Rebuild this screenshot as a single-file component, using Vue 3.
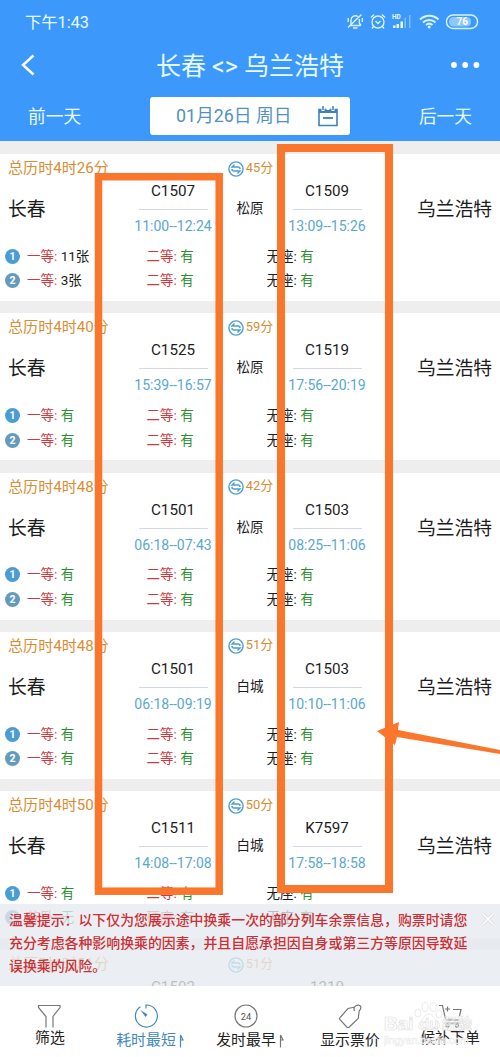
<template>
  <div class="screen">
    <header class="header">
      <div class="status">
        <span class="clock">下午1:43</span>
        <svg class="status-icons" width="136" height="20" viewBox="0 0 136 20" fill="none" stroke="#d9f4ff" stroke-width="1.400">
          <path d="M4 14.500h10.500M5 13.500V9a4.500 4.500 0 0 1 7-3.500M13.300 8v4l1.700 2.500M7 17h4.500M2 16.500 15.500 3.500M2.200 7v4M16.300 7v4" />
          <circle cx="32" cy="11" r="6" />
          <path d="m29.500 10 2.500 2.500 2.500-2.500M25 6.500l3-3M36 3.500l3 3M27.500 15.500 26 17.500M36.500 15.500l1.500 2" />
          <text x="46" y="7.500" class="hd">HD</text>
          <g stroke="none" fill="#e9fbff">
            <path d="M47 14.500h2.500V17H47zM50.500 13h2.500v4h-2.500zM54.500 10.500H57V17h-2.500z" />
            <path d="M58.500 6.500H60V17h-1.500zM63 4h1.500v13H63z" opacity=".4" />
          </g>
          <path d="M74 8.500a13 13 0 0 1 18.500 0M77 11.500a9 9 0 0 1 12.500 0M80 14a5 5 0 0 1 6.500 0" stroke-width="2" />
          <circle cx="83.200" cy="16" r="1.500" fill="#d9f4ff" stroke="none" />
          <rect x="100.500" y="4" width="31" height="13.500" rx="6.500" />
          <rect x="103" y="6" width="22" height="9.500" rx="4.500" fill="#8ec8fb" stroke="none" />
          <text x="110.500" y="14.400" class="battery">76</text>
        </svg>
      </div>
      <div class="title-row">
        <svg width="16" height="24" viewBox="0 0 16 24" fill="none" stroke="#fff" stroke-width="2.500">
          <path d="M13.500 2.500 3 12l10.500 9.500" />
        </svg>
        <h1>长春 &lt;&gt; 乌兰浩特</h1>
        <svg width="30" height="8" viewBox="0 0 30 8" fill="#fff">
          <circle cx="4" cy="4" r="2.900" />
          <circle cx="15.200" cy="4" r="2.900" />
          <circle cx="26.400" cy="4" r="2.900" />
        </svg>
      </div>
      <div class="date-row">
        <span class="day">前一天</span>
        <div class="date">
          <span>01月26日 周日</span>
          <svg width="20" height="21" viewBox="0 0 20 21" fill="none" stroke="#3e82b8">
            <path d="M1 3.500h18v16H1z" stroke-width="1.600" />
            <path d="M1 5h18" stroke-width="4" />
            <path d="M5 0v5M10 0v4M15 0v5" stroke="#fff" stroke-width="3" />
            <path d="M5 0v4M15 0v4" stroke-width="1.500" />
            <path d="M5 12h10" stroke-width="1.800" />
          </svg>
        </div>
        <span class="day">后一天</span>
      </div>
    </header>

    <main class="list">
      <section v-for="(trip, i) in trips" :key="i" class="card">
        <div class="route">
          <div class="from">
            <span class="total">总历时{{ trip.total }}</span>
            <span class="city">长春</span>
          </div>
          <div class="train">
            <span class="no">{{ trip.first[0] }}</span>
            <span class="time">{{ trip.first[1] }}</span>
          </div>
          <div class="via">
            <span class="wait">
              <svg width="16" height="16" viewBox="0 0 16 16" fill="none" stroke="#4e9fcf" stroke-width="1.400">
                <circle cx="8" cy="8" r="7.100" />
                <path d="M6.500 3.500 4 6h6c1.500 0 2 .8 2 2M9.500 12.500 12 10H6C4.500 10 4 9.200 4 8" />
              </svg>
              {{ trip.wait }}分
            </span>
            <span class="via-city">{{ trip.via }}</span>
          </div>
          <div class="train">
            <span class="no">{{ trip.second[0] }}</span>
            <span class="time">{{ trip.second[1] }}</span>
          </div>
          <span class="city to">乌兰浩特</span>
        </div>
        <div v-for="(seat, n) in trip.seats" :key="n" class="seats">
          <i :class="{ two: n === 1 }">{{ n + 1 }}</i>
          <span class="s1"><b>{{ seat[0] }}:</b> <em :class="{ count: seat[1].includes('张') }">{{ seat[1] }}</em></span>
          <span class="s2"><b>{{ seat[2] }}:</b> <em>有</em></span>
          <span class="s3">无座: <em>有</em></span>
        </div>
      </section>

      <div class="notice">
        <p>温馨提示：以下仅为您展示途中换乘一次的部分列车余票信息，购票时请您</p>
        <p>充分考虑各种影响换乘的因素，并且自愿承担因自身或第三方等原因导致延</p>
        <p>误换乘的风险。</p>
        <svg class="close" width="14" height="14" viewBox="0 0 14 14" fill="none">
          <path d="m1.500 1.500 11 11M12.500 1.500l-11 11" stroke="#d3d8dc" stroke-width="3" />
          <path d="m1.500 1.500 11 11M12.500 1.500l-11 11" stroke="#fff" stroke-width="1.600" />
        </svg>
      </div>
    </main>

    <footer class="tabs">
      <div class="tab filter">
        <svg width="26" height="26" viewBox="0 0 26 26">
          <path d="M10 24.500V13.500L2.500 4.500V2.500h21.500v2l-7 9v11" />
        </svg>
        <span>筛选</span>
      </div>
      <div class="tab active">
        <svg width="26" height="26" viewBox="0 0 26 26">
          <path d="M7.500 3.700A11 11 0 1 0 13 2v3.500" />
          <path d="m7.500 7 7 4.500-2 2.500z" class="solid" />
        </svg>
        <span>耗时最短<svg width="5" height="14" viewBox="0 0 5 14"><path d="M1.500 13.500V1L4 6H1.500" /></svg></span>
      </div>
      <div class="tab">
        <svg width="26" height="26" viewBox="0 0 26 26">
          <circle cx="13" cy="13" r="11" />
          <text x="7.700" y="16.500">24</text>
        </svg>
        <span>发时最早<svg width="5" height="14" viewBox="0 0 5 14"><path d="M1.500 13.500V1L4 6H1.500" /></svg></span>
      </div>
      <div class="tab price">
        <svg width="26" height="26" viewBox="0 0 26 26">
          <path d="M17.500 8C16 4.500 18.500 2 21.500 2.200c3 .3 3 3 .7 5.800l-1 7.500L12 24.200q-1 .7-2 0l-7-7.500q-1-1 0-2L11 5.500l7-1.500" />
        </svg>
        <span>显示票价</span>
      </div>
      <div class="tab order">
        <svg width="26" height="26" viewBox="0 0 26 26">
          <path d="M2 2.500h3.500l3 13.500M8 6h5m-2.500-2.500v5M16 6.500h8L22.500 13M9 17h13M8.500 20h14" />
          <circle cx="10.500" cy="22.500" r="1.600" />
          <circle cx="20" cy="22.500" r="1.600" />
        </svg>
        <span>候补下单</span>
      </div>
      <svg class="watermark" width="96" height="50" viewBox="0 0 96 50">
        <text x="0" y="30" class="wm-big">Bai</text>
        <text x="36" y="29" class="wm-du">du</text>
        <text x="58" y="29" class="wm-cn">经验</text>
        <text x="0" y="44" class="wm-url">jingyan.baidu.com</text>
        <g>
          <ellipse cx="34" cy="13" rx="3" ry="4" />
          <ellipse cx="41" cy="7" rx="3" ry="4.500" />
          <ellipse cx="49" cy="7" rx="3" ry="4.500" />
          <ellipse cx="55" cy="14" rx="3" ry="4" />
          <path d="M45 14c-4 0-6 5-9 8s-1 9 4 8 6-1 10 0 8-5 4-8-5-8-9-8z" fill="none" />
        </g>
      </svg>
    </footer>

    <!-- highlight frames and arrow over the list -->
    <svg class="marks" width="500" height="1057" viewBox="0 0 500 1057" fill="none" stroke="#fb762d">
      <rect x="98.500" y="176.700" width="120.700" height="714.500" stroke-width="7.500" />
      <rect x="281" y="148" width="108" height="741" stroke-width="8" />
      <path d="M377 731l22-9-1 8 102 20v4l-103-17-2 8z" fill="#fb762d" stroke="none" />
    </svg>
  </div>
</template>

<script setup>
const has = (a = '一等', b = '有', c = '二等') => [a, b, c]

const trips = [
  { total: '4时26分', first: ['C1507', '11:00--12:24'], wait: 45, via: '松原', second: ['C1509', '13:09--15:26'], seats: [has('一等', '11张'), has('一等', '3张')] },
  { total: '4时40分', first: ['C1525', '15:39--16:57'], wait: 59, via: '松原', second: ['C1519', '17:56--20:19'], seats: [has(), has()] },
  { total: '4时48分', first: ['C1501', '06:18--07:43'], wait: 42, via: '松原', second: ['C1503', '08:25--11:06'], seats: [has(), has()] },
  { total: '4时48分', first: ['C1501', '06:18--09:19'], wait: 51, via: '白城', second: ['C1503', '10:10--11:06'], seats: [has(), has()] },
  { total: '4时50分', first: ['C1511', '14:08--17:08'], wait: 50, via: '白城', second: ['K7597', '17:58--18:58'], seats: [has(), has('软卧', '无', '硬座')] },
  { total: '4时51分', first: ['C1502', ''], wait: 51, via: '', second: ['1210', ''], seats: [] },
]
</script>

<style>
body {
  margin: 0;
}
</style>

<style scoped>
.screen {
  position: relative;
  display: flex;
  flex-direction: column;
  width: 500px;
  height: 1057px;
  overflow: hidden;
  background: #fff;
  color: #1c1c1c;
  font-family: Roboto, "Noto Sans CJK SC", sans-serif;
  white-space: nowrap;
}

.header {
  height: 141px;
  flex: none;
  background: #3d98fb;
  color: #e6fbff;
}

.status {
  display: flex;
  justify-content: space-between;
  align-items: center;
  height: 41px;
  padding: 0 18px 0 25px;
}

.clock {
  font-size: 16.3px;
}

.hd {
  font: bold 6.5px Roboto, sans-serif;
  fill: #e9fbff;
  stroke: none;
}

.battery {
  font: bold 10px Roboto, sans-serif;
  fill: #fff;
  stroke: none;
}

.title-row {
  display: flex;
  justify-content: space-between;
  align-items: center;
  height: 48px;
  padding: 0 20px;
}

.title-row h1 {
  margin: 3px 0 0 14px;
  font-size: 25px;
  font-weight: 400;
  line-height: 45px;
}

.date-row {
  display: flex;
  justify-content: space-between;
  align-items: center;
  padding: 8px 28px 0;
}

.day {
  margin-top: -3px;
  font-size: 17.7px;
}

.date {
  display: flex;
  justify-content: space-between;
  align-items: center;
  box-sizing: border-box;
  width: 200px;
  height: 38px;
  padding: 0 12px 0 26px;
  border-radius: 3px;
  background: #fff;
  color: #5092c0;
  font-size: 17.8px;
}

.date span {
  margin-top: -4px;
}

.date svg {
  margin-top: 1px;
}

.list {
  position: relative;
  flex: none;
  box-sizing: border-box;
  height: 845px;
  padding-top: 13px;
  overflow: hidden;
  background: #eee;
}

.card {
  height: 147px;
  margin-bottom: 12.3px;
  overflow: hidden;
  background: #fff;
}

.route {
  display: grid;
  grid-template-columns: 123px 100px 54px 100px 1fr;
  height: 89px;
}

.from,
.train,
.via {
  display: flex;
  flex-direction: column;
}

.total {
  margin-left: 8px;
  color: #d98d33;
  font-size: 15.1px;
  line-height: 28px;
}

.city {
  margin-left: 8px;
  font-size: 18.8px;
  line-height: 56px;
}

.to {
  margin: 28px 8px 0 0;
  text-align: right;
}

.train {
  align-items: center;
  padding-top: 26px;
}

.no {
  width: 69px;
  height: 29px;
  border-bottom: 1px solid #d3d9e4;
  font-size: 15.2px;
  line-height: 22px;
  text-align: center;
}

.time {
  color: #5aa7d0;
  font-size: 14px;
  line-height: 32px;
}

.via {
  align-items: center;
}

.wait {
  display: flex;
  align-items: center;
  gap: 2px;
  height: 24px;
  margin-left: 1px;
  color: #d98d33;
  font-size: 12.9px;
}

.wait svg {
  margin-top: 5px;
}

.via-city {
  font-size: 13.5px;
  line-height: 60px;
}

.seats {
  display: flex;
  align-items: center;
  height: 24.5px;
  font-size: 13.5px;
}

.seats i {
  width: 15px;
  margin: 2px 7px 0 5px;
  border-radius: 50%;
  background: #4a9dd3;
  color: #fff;
  font-size: 10.5px;
  font-style: normal;
  font-weight: 700;
  line-height: 15px;
  text-align: center;
}

.seats i.two {
  background: #629bbd;
}

.seats b {
  color: #ce3b3f;
  font-weight: 400;
}

.seats em {
  color: #2c912f;
  font-style: normal;
}

.seats em.count {
  color: #1c1c1c;
}

.seats span {
  margin-top: -1px;
}

.s1 {
  width: 119.5px;
}

.s2 {
  width: 120px;
}

.notice {
  position: absolute;
  left: 0;
  right: 0;
  bottom: 0;
  height: 72px;
  padding: 5px 9px;
  background: rgba(230, 235, 240, 0.78);
  color: #cb3036;
  font-size: 13.9px;
  font-weight: 500;
  line-height: 23px;
}

.notice p {
  margin: 0;
}

.close {
  position: absolute;
  top: 8px;
  right: 5px;
}

.tabs {
  position: relative;
  display: flex;
  flex: none;
  height: 71px;
  background: #fff;
  color: #222;
}

.tab {
  display: flex;
  flex-direction: column;
  align-items: center;
  width: 100px;
  padding-top: 17px;
  font-size: 14.9px;
  line-height: 22px;
}

.tab > svg {
  margin-left: -8px;
}

.filter > svg {
  margin-left: -2px;
}

.price > svg,
.order > svg {
  margin-left: 0;
}

.tab svg {
  fill: none;
  stroke: #777;
  stroke-width: 1.2;
}

.tab text {
  fill: #555;
  stroke: none;
  font-size: 9.3px;
}

.tab span svg {
  margin-left: 3px;
  vertical-align: -3px;
}

.tab.filter span,
.tab.order span {
  margin-top: -2px;
}

.tab.active {
  color: #4389bd;
}

.tab.active svg {
  stroke: #4389bd;
}

.tab.active .solid {
  fill: #4389bd;
  stroke: none;
}

.watermark {
  position: absolute;
  right: 20px;
  top: 14px;
  font-family: "Liberation Sans", "Noto Sans CJK SC", sans-serif;
  font-weight: 700;
  fill: rgba(255, 255, 255, 0.45);
  stroke: #ddd;
  stroke-width: 0.6;
}

.wm-big {
  font-size: 19px;
}

.wm-du {
  font-size: 15px;
}

.wm-cn {
  font-size: 15px;
}

.wm-url {
  font-size: 10.5px;
  font-weight: 400;
  stroke: #ececec;
}

.marks {
  position: absolute;
  inset: 0;
  pointer-events: none;
}
</style>
